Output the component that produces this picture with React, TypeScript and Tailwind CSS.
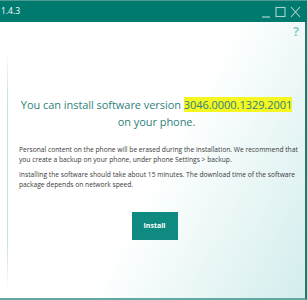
import React from 'react';

export default function App() {
  return (
    <div className="w-[307px] h-[300px] bg-white flex flex-col overflow-hidden" style={{ fontFamily: '"Open Sans", sans-serif' }}>
      {/* Title bar */}
      <div className="h-[22px] bg-[#00796f] border-t border-[#4e9c95] flex items-center justify-between pl-[1px] pr-[6px]">
        <span className="text-white text-[8.5px] leading-none">1.4.3</span>
        <div className="flex items-center gap-[4px] text-[#a9d6d2]">
          <svg width="10" height="12" viewBox="0 0 10 12"><line x1="1" y1="11" x2="9" y2="11" stroke="currentColor" strokeWidth="1.2" /></svg>
          <svg width="11" height="12" viewBox="0 0 11 12"><rect x="1" y="1.5" width="9" height="9" fill="none" stroke="currentColor" strokeWidth="1.1" /></svg>
          <svg width="11" height="12" viewBox="0 0 11 12"><path d="M1 1 L10 11 M10 1 L1 11" stroke="currentColor" strokeWidth="1.1" /></svg>
        </div>
      </div>

      {/* Body */}
      <div className="flex-1 flex border-b-2 border-[#62a9a2] border-r-2 border-r-[#157f76] bg-[linear-gradient(118deg,#ffffff_52%,#d3eded_100%)]">
        <div className="w-[7px]" />
        <div className="w-[1px] mt-[28px] mb-[6px] bg-[linear-gradient(to_bottom,#ffffff,#c4e2df_20%,#c4e2df_80%,#ffffff)]" />
        <div className="flex-1 flex flex-col">
          <div className="flex justify-end pr-[6px] pt-[4px] h-[20px]">
            <span className="text-[#86cbc6] text-[12px] font-bold leading-none">?</span>
          </div>
          <div className="mt-[54px] text-center text-[#2e817c] text-[11px] leading-[17px] tracking-[-0.05px]">
            <p>
              You can install software version <span className="bg-[#f4f721]">3046.0000.1329.2001</span>
            </p>
            <p>on your phone.</p>
          </div>
          <div className="mt-[15px] pl-[11px] pr-[6px] text-[#3a3a3a] text-[6.7px] leading-[10px]">
            <p>Personal content on the phone will be erased during the installation. We recommend that you create a backup on your phone, under phone Settings &gt; backup.</p>
            <p className="mt-[5px]">Installing the software should take about 15 minutes. The download time of the software package depends on network speed.</p>
          </div>
          <div className="flex justify-center mt-[22px] pr-[4px]">
            <button className="w-[46px] h-[28px] bg-[#0f8a80] text-white text-[7px] font-bold">Install</button>
          </div>
        </div>
      </div>
    </div>
  );
}
